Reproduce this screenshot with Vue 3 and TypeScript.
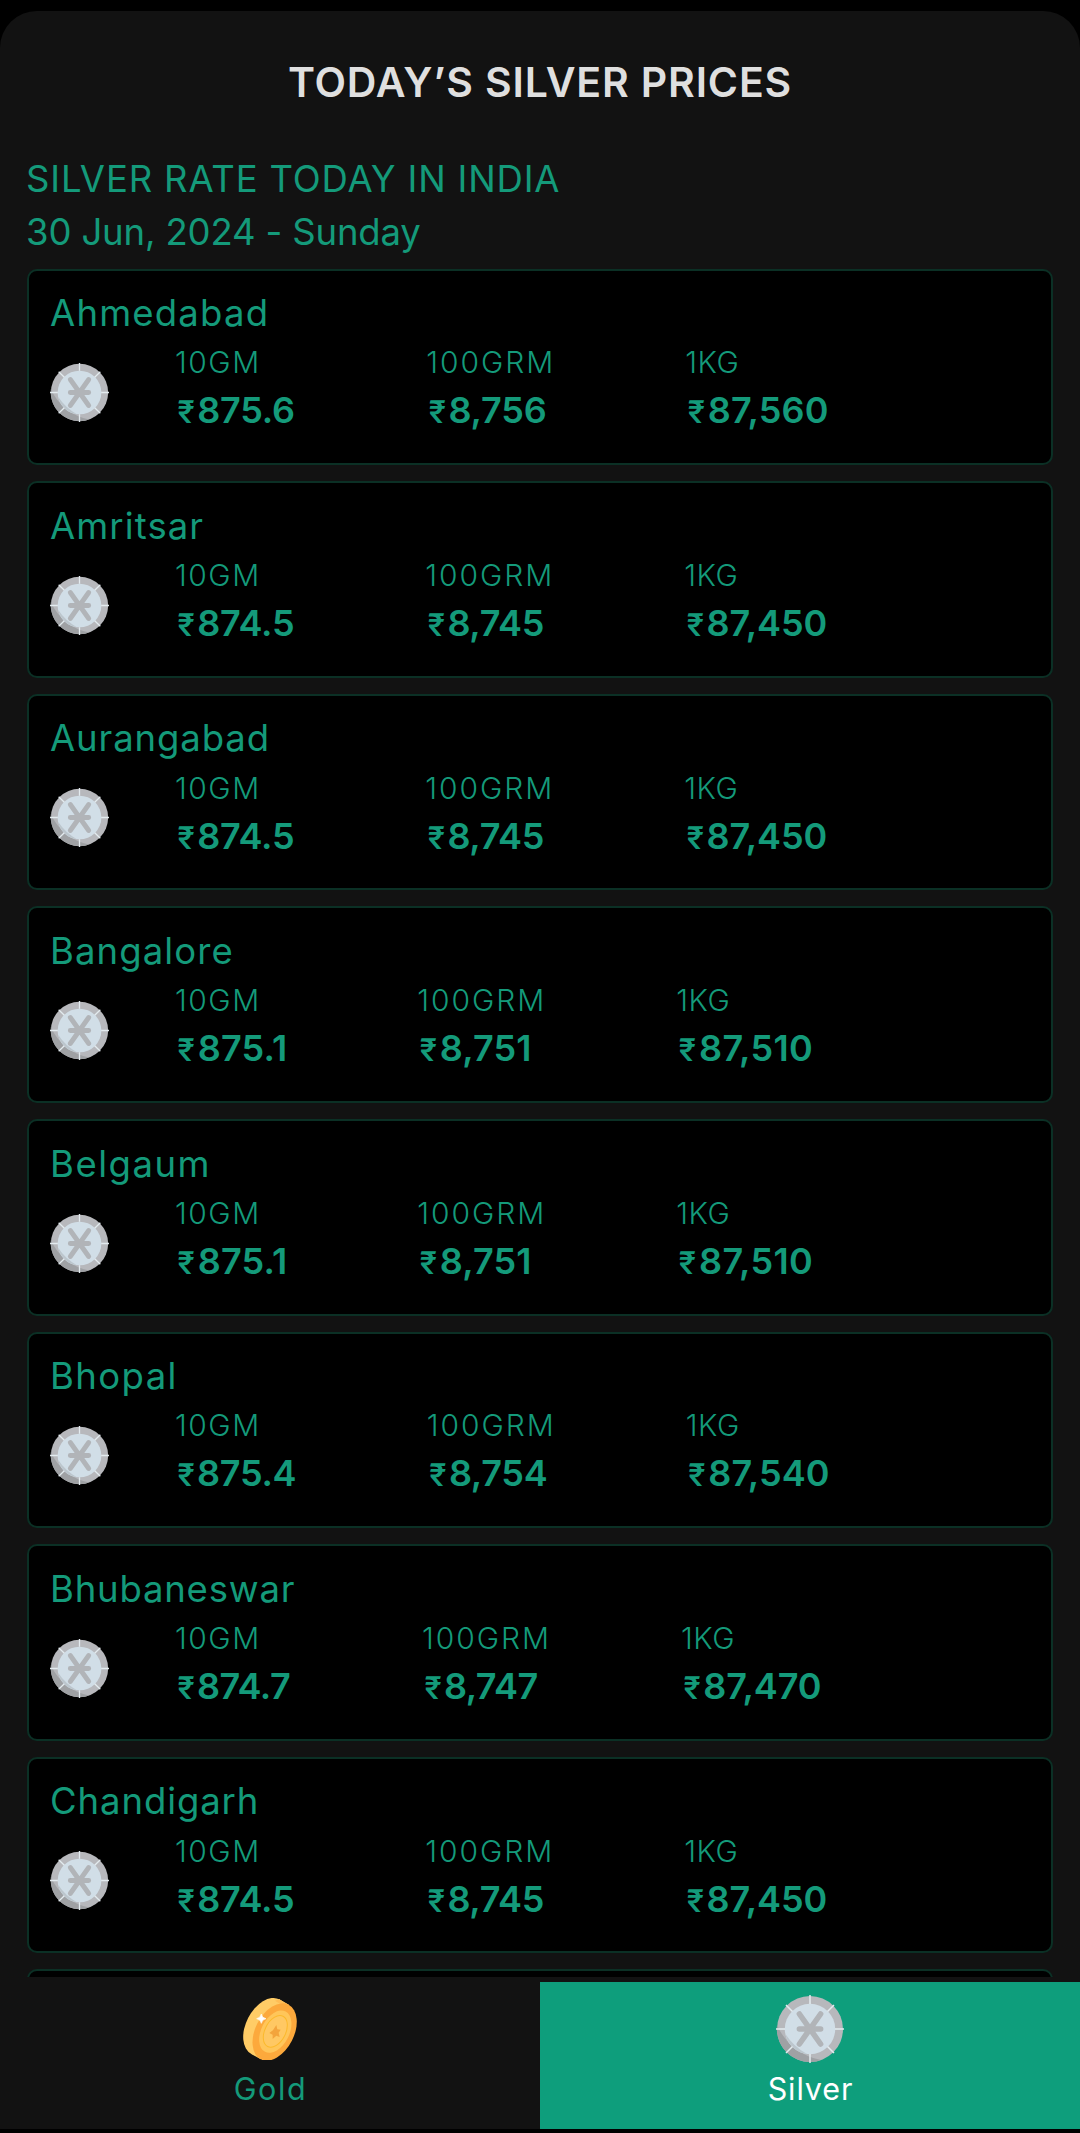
<script setup lang="ts">
interface Rate {
  label: string
  amount: string
  labelTracking: number
  tracking: number
  width: number
}
interface City {
  name: string
  tracking: number
  rates: Rate[]
}

// Amounts are listed as 10 grams, 100 grams and 1 kilogram, each with its tracking.
type Amount = [string, number]

function city(name: string, tracking: number, gm: Amount, grm: Amount, kg: Amount, firstWidth: number): City {
  return {
    name,
    tracking,
    rates: [
      { label: '10GM', amount: gm[0], labelTracking: 1.5, tracking: gm[1], width: firstWidth },
      { label: '100GRM', amount: grm[0], labelTracking: 1.95, tracking: grm[1], width: 259 },
      { label: '1KG', amount: kg[0], labelTracking: 0.5, tracking: kg[1], width: 200 },
    ],
  }
}

const cities: City[] = [
  city('Ahmedabad', 1.2, ['875.6', -0.2], ['8,756', -0.2], ['87,560', 0.15], 251.3),
  city('Amritsar', 1.1, ['874.5', -0.2], ['8,745', -0.3], ['87,450', -0.1], 250.3),
  city('Aurangabad', 0.9, ['874.5', -0.2], ['8,745', -0.3], ['87,450', -0.1], 250.3),
  city('Bangalore', 1.1, ['875.1', 0.25], ['8,751', 0.1], ['87,510', 0.35], 242.3),
  city('Belgaum', 1.5, ['875.1', 0.25], ['8,751', 0.1], ['87,510', 0.35], 242.3),
  city('Bhopal', 1.4, ['875.4', -0.3], ['8,754', -0.3], ['87,540', 0.1], 251.8),
  city('Bhubaneswar', 0.8, ['874.7', -0.5], ['8,747', -0.5], ['87,470', -0.1], 247),
  city('Chandigarh', 0.9, ['874.5', -0.2], ['8,745', -0.3], ['87,450', -0.1], 250.3),
]
</script>

<template>
  <div class="screen">
    <svg class="defs" width="0" height="0" aria-hidden="true">
      <symbol id="silver-coin" viewBox="-34 -34 68 68">
        <circle r="33" fill="#b7b8bc" />
        <path d="M-33-4A33.2 33.2 0 0 0 11 31A60 60 0 0 1-33-4Z" fill="#9fa1a4" />
        <circle r="25.2" fill="#d1dee7" />
        <path d="M-24.6 5A25.2 25.2 0 0 0-3 25A60 60 0 0 1-24.6 5Z" fill="#bcc6cd" />
        <g stroke="#e3ebef" stroke-width="1.5">
          <path d="M0-34V-25M0 34V25M-34 0H-25M34 0H25M-24-24L-17.5-17.5M24-24L17.5-17.5M-24 24L-17.5 17.5M24 24L17.5 17.5" />
        </g>
        <path d="M-10.6-15L10.6 15M10.6-15L-10.6 15M-10.6 0H10.6" fill="none" stroke="#b1b4b8" stroke-width="5.6" stroke-linecap="round" />
      </symbol>
    </svg>

    <main class="panel">
      <h1 class="title">TODAY’S SILVER PRICES</h1>
      <p class="heading rate">SILVER RATE TODAY IN INDIA</p>
      <p class="heading date">30 Jun, 2024 - Sunday</p>

      <section class="list">
        <article v-for="c in cities" :key="c.name" class="card">
          <h2 class="name" :style="{ letterSpacing: c.tracking + 'px' }">{{ c.name }}</h2>
          <div class="row">
            <svg class="coin"><use href="#silver-coin" /></svg>
            <div v-for="r in c.rates" :key="r.label" class="rate-col" :style="{ width: r.width + 'px' }">
              <div class="label" :style="{ letterSpacing: r.labelTracking + 'px' }">{{ r.label }}</div>
              <div class="value" :style="{ letterSpacing: r.tracking + 'px' }"><span class="rupee">₹</span>{{ r.amount }}</div>
            </div>
          </div>
        </article>
        <article class="card"></article>
      </section>
    </main>

    <nav class="tabs">
      <div class="tab gold">
        <div class="icon">
          <svg width="54.3" height="62.7" viewBox="38 38 163 188">
            <g fill="#ffcc66">
              <ellipse cx="105" cy="124" rx="58" ry="92" transform="rotate(27 105 124)" />
              <path d="M146.8 42L174.8 58L91.2 222L63.2 206Z" />
            </g>
            <path d="M146.8 42L178 60L166 66L134 46Z" fill="#ffbd55" />
            <ellipse cx="133" cy="140" rx="58" ry="92" transform="rotate(27 133 140)" fill="#fca93c" />
            <ellipse cx="135" cy="139" rx="42" ry="68" transform="rotate(27 135 139)" fill="#ffc65a" />
            <ellipse cx="135" cy="138" rx="31" ry="51" transform="rotate(27 135 138)" fill="#ffc863" stroke="#fbb92c" stroke-width="3" />
            <path d="M138 119L141 132L151 133L145 142L148 155L138 151L127 161L127 148L117 143L128 135Z" fill="#f3a43c" />
            <path d="M93 86Q95 98 107 100Q95 102 93 114Q91 102 79 100Q91 98 93 86Z" fill="#fff" stroke="#fff" stroke-width="2" />
          </svg>
        </div>
        <span class="tab-label">Gold</span>
      </div>
      <div class="tab silver">
        <div class="icon">
          <svg width="68" height="68"><use href="#silver-coin" /></svg>
        </div>
        <span class="tab-label">Silver</span>
      </div>
    </nav>
  </div>
</template>

<style>
body {
  background: #000;
}
</style>

<style scoped>
.screen {
  box-sizing: border-box;
  display: flex;
  flex-direction: column;
  width: 1080px;
  height: 2133px;
  padding: 11px 0 4px;
  overflow: hidden;
  background: #000;
  color: #149a7a;
  font-family: Inter, "Liberation Sans", sans-serif;
}
.defs {
  position: absolute;
}
.panel {
  display: flex;
  flex: 1;
  flex-direction: column;
  min-height: 0;
  box-sizing: border-box;
  padding: 46px 27px 5px;
  border-radius: 37px 37px 0 0;
  background: #121212;
}
.title {
  margin: 0 0 46px;
  color: #dfdfdf;
  font-size: 41px;
  font-weight: 600;
  line-height: 50px;
  letter-spacing: 0.85px;
  text-align: center;
}
.heading {
  margin: 0 0 0 -1px;
  font-size: 36.5px;
  font-weight: 430;
  line-height: 53px;
  white-space: nowrap;
}
.rate {
  letter-spacing: 0.83px;
}
.date {
  letter-spacing: -0.15px;
}
.list {
  display: flex;
  flex: 1;
  flex-direction: column;
  gap: 16px;
  min-height: 0;
  margin-top: 9.7px;
  overflow: hidden;
}
.card {
  flex: none;
  box-sizing: border-box;
  height: 196.6px;
  padding: 20.6px 0 0 21px;
  border: 2px solid #0b3025;
  border-radius: 10px;
  background: #000;
}
.name {
  margin: 0;
  font-size: 36.5px;
  font-weight: 430;
  line-height: 44px;
}
.row {
  display: flex;
  margin-top: 7.1px;
}
.coin {
  flex: none;
  width: 59px;
  height: 59px;
  margin: 20.8px 66.3px 0 0.4px;
}
.rate-col {
  flex: none;
}
.label {
  margin-left: -0.7px;
  font-size: 30px;
  font-weight: 300;
  line-height: 40px;
}
.value {
  margin-top: 3px;
  padding-left: 2px;
  font-size: 36px;
  font-weight: 620;
  line-height: 50px;
}
.rupee {
  margin-right: 3px;
  font-family: Roboto, sans-serif;
  font-size: 32px;
  font-weight: 500;
  line-height: 0;
}
.tabs {
  display: flex;
  flex: none;
  height: 147px;
  background: #121212;
}
.tab {
  display: flex;
  flex: 1;
  flex-direction: column;
  align-items: center;
  box-sizing: border-box;
  padding-top: 13px;
}
.icon {
  display: flex;
  align-items: center;
  justify-content: center;
  height: 68px;
}
.tab-label {
  margin-top: 6px;
  font-size: 30.5px;
  font-weight: 430;
  line-height: 40px;
}
.gold .tab-label {
  padding-left: 1px;
  letter-spacing: 1.6px;
}
.silver {
  background: #0e9e7c;
  color: #fff;
}
.silver .tab-label {
  padding-left: 1px;
  letter-spacing: 0.9px;
}
</style>
